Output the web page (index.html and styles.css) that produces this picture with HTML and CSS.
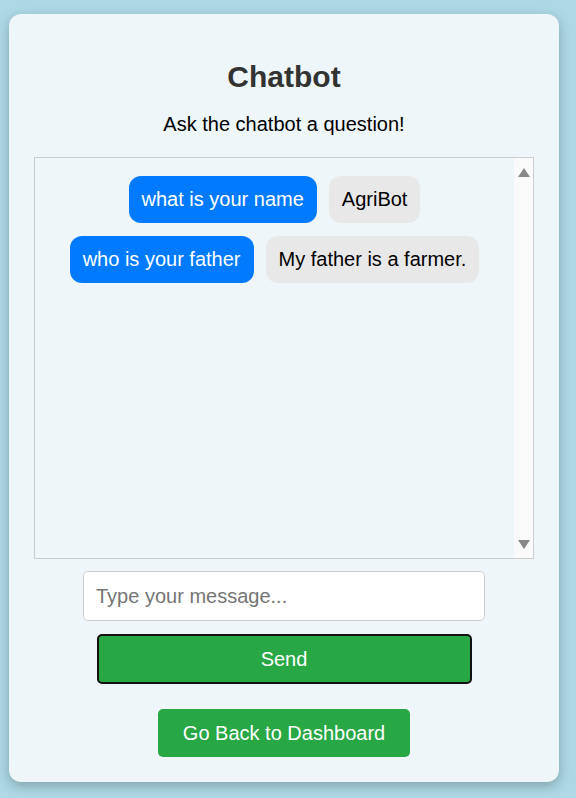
FILE: index.html
```html
<!DOCTYPE html>
<html lang="en">
<head>
<meta charset="utf-8">
<title>Chatbot</title>
<link rel="stylesheet" href="styles.css">
</head>
<body>
  <main class="card">
    <h1 class="title">Chatbot</h1>
    <p class="subtitle">Ask the chatbot a question!</p>
    <div class="chat">
      <div class="messages">
        <div class="row">
          <span class="bubble user">what is your name</span>
          <span class="bubble bot">AgriBot</span>
        </div>
        <div class="row">
          <span class="bubble user">who is your father</span>
          <span class="bubble bot">My father is a farmer.</span>
        </div>
      </div>
      <div class="scrollbar">
        <span class="arrow up"></span>
        <span class="arrow down"></span>
      </div>
    </div>
    <input class="msg-input" type="text" placeholder="Type your message...">
    <button class="send-btn" type="button">Send</button>
    <button class="back-btn" type="button">Go Back to Dashboard</button>
  </main>
</body>
</html>
```
FILE: styles.css
```css
* { box-sizing: border-box; }

html, body {
  margin: 0;
  padding: 0;
}

body {
  background: #add8e6;
  font-family: "Liberation Sans", Arial, sans-serif;
  padding: 14px 0 0 9px;
  min-height: 798px;
}

.card {
  width: 550px;
  background: #eff6fa;
  border-radius: 12px;
  box-shadow: 0 4px 12px rgba(0, 0, 0, 0.25);
  padding: 46px 25px 25px;
  display: flex;
  flex-direction: column;
  align-items: center;
}

.title {
  margin: 0;
  font-size: 30px;
  font-weight: bold;
  color: #333;
  line-height: normal;
}

.subtitle {
  margin: 19px 0 0;
  font-size: 20px;
  color: #000;
  line-height: normal;
}

.chat {
  margin-top: 21px;
  width: 500px;
  height: 402px;
  border: 1px solid #ccc;
  display: flex;
}

.messages {
  flex: 1;
  padding-top: 18px;
  display: flex;
  flex-direction: column;
  gap: 13px;
}

.row {
  display: flex;
  justify-content: center;
  gap: 12px;
}

.bubble {
  font-size: 20px;
  line-height: 23px;
  padding: 12px 13px;
  border-radius: 12px;
}

.bubble.user {
  background: #007bff;
  color: #fff;
}

.bubble.bot {
  background: #e8e8e8;
  color: #000;
}

.scrollbar {
  width: 19px;
  background: #fafafa;
  display: flex;
  flex-direction: column;
  justify-content: space-between;
  align-items: center;
  padding: 10px 0 9px;
}

.arrow {
  width: 0;
  height: 0;
  border-left: 6.5px solid transparent;
  border-right: 6.5px solid transparent;
}

.arrow.up {
  border-bottom: 9px solid #888;
}

.arrow.down {
  border-top: 9px solid #888;
}

.msg-input {
  margin-top: 12px;
  width: 402px;
  height: 50px;
  border: 1px solid #ccc;
  border-radius: 5px;
  padding: 0 12px;
  font-family: "Liberation Sans", Arial, sans-serif;
  font-size: 20px;
  background: #fff;
  color: #000;
  outline: none;
}

.msg-input::placeholder {
  color: #757575;
}

.send-btn {
  margin-top: 13px;
  width: 375px;
  height: 50px;
  background: #28a745;
  color: #fff;
  border: 2px solid #111;
  border-radius: 5px;
  font-family: "Liberation Sans", Arial, sans-serif;
  font-size: 20px;
  cursor: pointer;
}

.back-btn {
  margin-top: 25px;
  height: 48px;
  padding: 0 25px;
  background: #28a745;
  color: #fff;
  border: none;
  border-radius: 5px;
  font-family: "Liberation Sans", Arial, sans-serif;
  font-size: 20px;
  cursor: pointer;
}
```
